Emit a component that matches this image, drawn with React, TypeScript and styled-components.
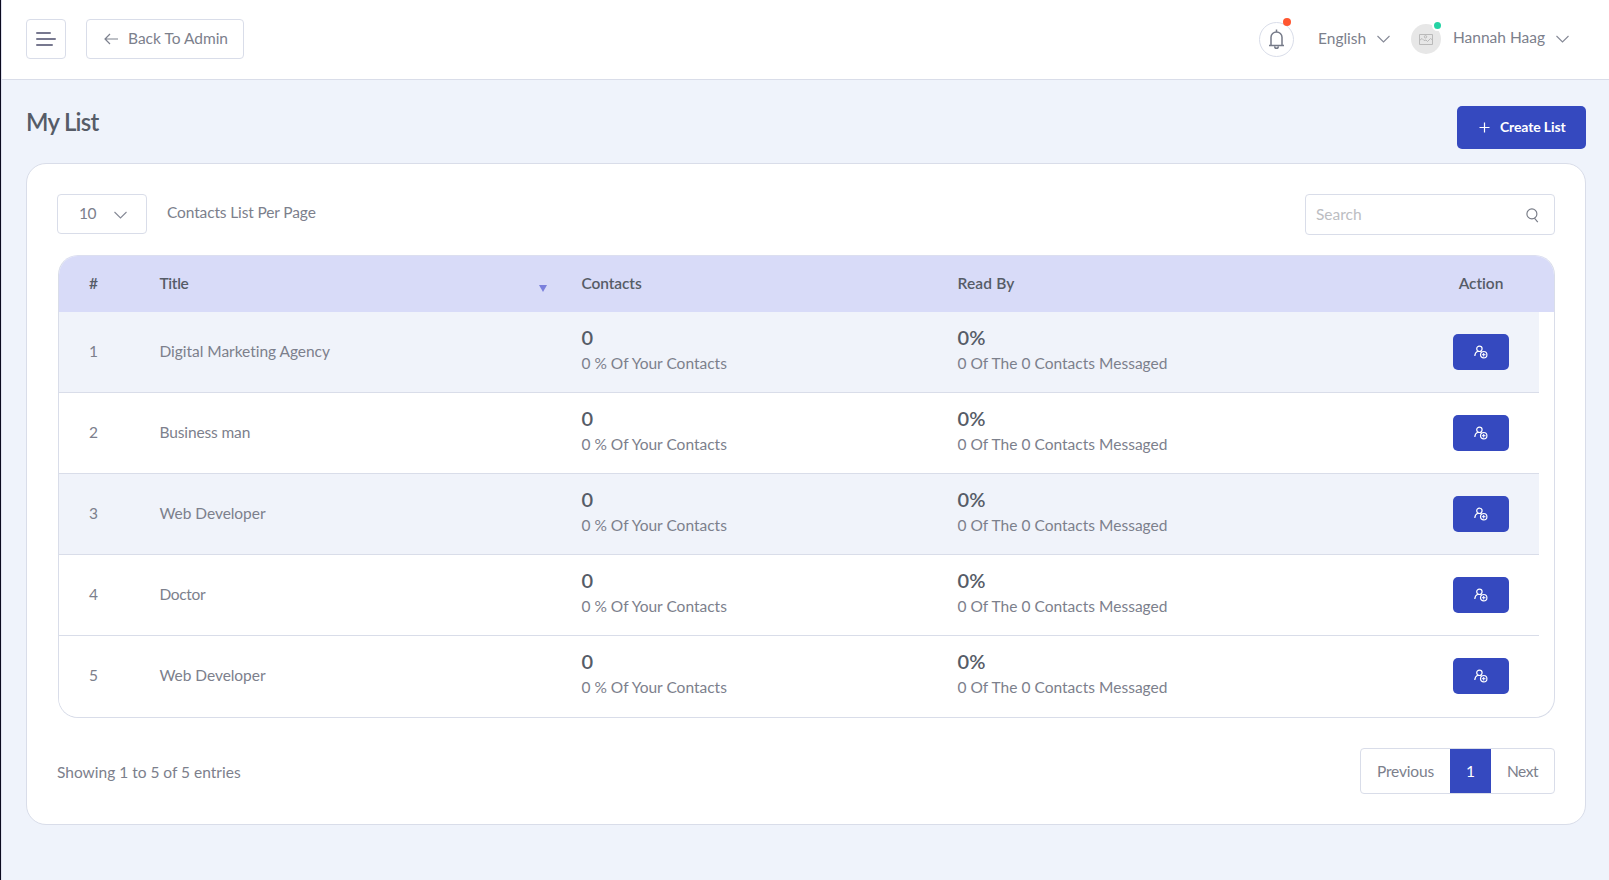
import React from "react";
import styled, { createGlobalStyle } from "styled-components";

const line = "#d9dde9";
const primary = "#3549bf";
const ink = "#7c808c";
const heading = "#565c67";

const GlobalStyle = createGlobalStyle`
  * { box-sizing: border-box; }
  body {
    margin: 0;
    background: #eff3fb;
    color: ${ink};
    font: 400 15.5px/24px Lato, "Liberation Sans", sans-serif;
    font-variant-ligatures: none;
  }
  button { font: inherit; color: inherit; cursor: pointer; padding: 0; }
`;

const Page = styled.div`
  min-height: 880px;
  border-left: 1px solid #0b0a1f;
  box-shadow: inset 1px 0 0 #dfe1ee;
`;

const Label = styled.span<{ $spacing?: number }>`
  letter-spacing: ${(p) => p.$spacing ?? 0}px;
  white-space: nowrap;
`;

const Header = styled.header`
  display: flex;
  align-items: flex-start;
  height: 80px;
  margin-left: 1px;
  padding: 19px 40px 0 24px;
  background: #fff;
  border-bottom: 1px solid ${line};
  ${Label} { padding-bottom: 2px; }
`;

const OutlineButton = styled.button<{ $width: number }>`
  display: flex;
  align-items: center;
  width: ${(p) => p.$width}px;
  height: 40px;
  background: #fff;
  border: 1px solid ${line};
  border-radius: 4px;
`;

const MenuButton = styled(OutlineButton)`
  padding-left: 9px;
  margin-right: 20px;
`;

const BackButton = styled(OutlineButton)`
  padding-left: 17px;
  gap: 9px;
`;

const HeaderTools = styled.div`
  display: flex;
  align-items: center;
  height: 40px;
  margin-left: auto;
`;

const BellButton = styled.button`
  position: relative;
  display: grid;
  place-items: center;
  width: 35px;
  height: 35px;
  margin: 1px 24px 0 0;
  background: #fff;
  border: 1px solid ${line};
  border-radius: 50%;
`;

const AlertDot = styled.i`
  position: absolute;
  top: -5px;
  right: 2px;
  width: 8px;
  height: 8px;
  border-radius: 50%;
  background: #ff5630;
`;

const Language = styled.div`
  display: flex;
  align-items: center;
  gap: 11px;
  width: 93px;
`;

const Avatar = styled.div`
  position: relative;
  display: grid;
  place-items: center;
  width: 30px;
  height: 30px;
  margin-right: 12px;
  border-radius: 50%;
  background: #e7e7e7;
`;

const OnlineDot = styled.i`
  position: absolute;
  top: -4px;
  right: -2px;
  width: 11px;
  height: 11px;
  border: 2px solid #fff;
  border-radius: 50%;
  background: #24d3a4;
`;

const UserName = styled.div`
  display: flex;
  align-items: center;
  gap: 11px;
  width: 116px;
  ${Label} { padding-bottom: 4px; }
`;

const Main = styled.main`
  padding: 26px 23px 0 25px;
`;

const TitleBar = styled.div`
  display: flex;
  justify-content: space-between;
  height: 57px;
`;

const PageTitle = styled.h1`
  margin: 0;
  font-size: 24px;
  font-weight: 600;
  line-height: 32px;
  letter-spacing: -0.75px;
  color: ${heading};
`;

const CreateButton = styled.button`
  display: flex;
  align-items: center;
  gap: 10px;
  width: 129px;
  height: 43px;
  padding: 0 0 0 22px;
  border: 0;
  border-radius: 5px;
  background: ${primary};
  color: #fff;
  font-size: 14px;
  font-weight: 700;
  ${Label} { padding-bottom: 2px; }
`;

const Card = styled.section`
  height: 662px;
  padding: 30px 30px 0;
  background: #fff;
  border: 1px solid ${line};
  border-radius: 20px;
`;

const Controls = styled.div`
  display: flex;
  align-items: flex-start;
  height: 61px;
`;

const PageSize = styled(OutlineButton)`
  padding-left: 21px;
  gap: 18px;
  margin-right: 20px;
  ${Label} { padding-bottom: 2px; }
  svg { margin-top: 2px; }
`;

const ControlLabel = styled.div`
  padding-top: 6px;
`;

const SearchBox = styled.label`
  display: flex;
  align-items: center;
  width: 250px;
  height: 41px;
  margin-left: auto;
  padding: 0 15px 0 10px;
  border: 1px solid ${line};
  border-radius: 4px;
  svg { margin-top: 2px; }
`;

const SearchInput = styled.input`
  flex: 1;
  min-width: 0;
  padding: 0 0 2px;
  border: 0;
  outline: 0;
  font: inherit;
  &::placeholder { color: #bcbdc2; opacity: 1; }
`;

const Table = styled.div`
  margin-left: 1px;
  height: 463px;
  overflow: hidden;
  border: 1px solid ${line};
  border-top-color: #dcdff0;
  border-radius: 20px;
`;

const Row = styled.div`
  display: grid;
  grid-template-columns: 70.5px 422px 376px 1fr 56px;
  align-items: center;
  padding: 0 30px;
`;

const HeadRow = styled(Row)`
  height: 56px;
  padding-right: 45px;
  background: #d8dbf8;
  color: ${heading};
  font-weight: 600;
`;

const HeadCell = styled.div`
  display: flex;
  justify-content: space-between;
  padding: 0 35px 3px 0;
`;

const ActionHeadCell = styled(HeadCell)`
  grid-column: 5;
  justify-content: center;
  padding-right: 0;
`;

const SortArrow = styled.svg`
  margin-top: 14px;
`;

const BodyRow = styled(Row)<{ $shaded: boolean }>`
  height: 81px;
  margin-right: 15px;
  background: ${(p) => (p.$shaded ? "#f0f3fa" : "#fff")};
  border-bottom: 1px solid ${line};
  &:last-child { border-bottom-color: transparent; }
`;

const Cell = styled.div`
  padding-bottom: 2px;
`;

const Stat = styled.div`
  display: flex;
  flex-direction: column;
  padding-bottom: 4px;
  line-height: 26px;
`;

const StatValue = styled.strong`
  font-size: 20px;
  font-weight: 600;
  line-height: 25px;
  letter-spacing: 0.2px;
  color: ${heading};
`;

const ActionButton = styled.button`
  grid-column: 5;
  display: grid;
  place-items: center;
  width: 56px;
  height: 36px;
  border: 0;
  border-radius: 5px;
  background: ${primary};
`;

const Footer = styled.footer`
  display: flex;
  justify-content: space-between;
  padding-top: 30px;
`;

const Summary = styled.div`
  padding-top: 12px;
`;

const Pagination = styled.nav`
  display: flex;
  height: 46px;
  border: 1px solid ${line};
  border-radius: 4px;
`;

const PageLink = styled.button<{ $width: number; $active?: boolean }>`
  width: ${(p) => p.$width}px;
  padding-bottom: 1px;
  border: 0;
  background: ${(p) => (p.$active ? primary : "transparent")};
  color: ${(p) => (p.$active ? "#fff" : ink)};
`;

const Chevron = () => (
  <svg width="13" height="8" viewBox="0 0 13 8" fill="none" stroke="#858996" strokeWidth="1.1">
    <path d="M.5 1 6.5 6.9 12.5 1" />
  </svg>
);

const MenuIcon = () => (
  <svg width="20" height="14" viewBox="0 0 20 14" fill="none" stroke="#77788f" strokeWidth="2" strokeLinecap="round">
    <path d="M1 1h13M1 7h18M1 13h15" />
  </svg>
);

const ArrowIcon = () => (
  <svg width="15" height="12" viewBox="0 0 15 12" fill="none" stroke="#7d818e" strokeWidth="1.2">
    <path d="M14 6H1.2M6 1 1 6l5 5" />
  </svg>
);

const BellIcon = () => (
  <svg width="17" height="21" viewBox="0 0 17 21" fill="none" stroke="#757a88" strokeWidth="1.5">
    <path d="M1 16.4h15M3 16V8.2a5.5 5.2 0 0 1 11 0V16M8.5 3V.5M6.7 17.5a1.8 1.8 0 0 0 3.6 0" />
  </svg>
);

const ImageIcon = () => (
  <svg width="14" height="11" viewBox="0 0 14 11" fill="none" stroke="#b9b9b9" strokeWidth="1">
    <path d="M.5.5h13v10H.5zM.5 6.5 3 4.500l2 2L7 6l1.500 1.500 3-3 2 1.500" />
    <circle cx="6.5" cy="2.800" r="1.200" />
  </svg>
);

const SearchIcon = () => (
  <svg width="13" height="15" viewBox="0 0 13 15" fill="none" stroke="#777b86" strokeWidth="1.15">
    <circle cx="5.9" cy="5.9" r="5" />
    <path d="m8.4 10.2 3.400 4" />
  </svg>
);

const PlusIcon = () => (
  <svg width="11" height="11" viewBox="0 0 11 11" stroke="#fff" strokeWidth="1.2">
    <path d="M5.5.5v10M.5 5.5h10" />
  </svg>
);

const AddContactIcon = () => (
  <svg width="14" height="14" viewBox="0 0 14 14" fill="none" stroke="#fff" strokeWidth="1.2">
    <circle cx="5.4" cy="3.8" r="2.7" />
    <path d="M.8 11c.1-2.400 1.200-4 3-4.700M6.500 6.500l1 .800" />
    <circle cx="9.7" cy="9.7" r="3.2" />
    <path d="M9.700 7.900v3.600M7.900 9.700h3.600" strokeWidth="1" />
  </svg>
);

const lists = [
  { title: "Digital Marketing Agency", spacing: -0.03, shaded: true },
  { title: "Business man", spacing: -0.13, shaded: false },
  { title: "Web Developer", spacing: -0.05, shaded: true },
  { title: "Doctor", spacing: -0.35, shaded: false },
  { title: "Web Developer", spacing: -0.05, shaded: false },
];

export default function App() {
  return (
    <Page>
      <GlobalStyle />
      <Header>
        <MenuButton $width={40} aria-label="Menu"><MenuIcon /></MenuButton>
        <BackButton $width={158}>
          <ArrowIcon />
          <Label>Back To Admin</Label>
        </BackButton>
        <HeaderTools>
          <BellButton aria-label="Notifications"><BellIcon /><AlertDot /></BellButton>
          <Language><Label>English</Label><Chevron /></Language>
          <Avatar><ImageIcon /><OnlineDot /></Avatar>
          <UserName><Label>Hannah Haag</Label><Chevron /></UserName>
        </HeaderTools>
      </Header>
      <Main>
        <TitleBar>
          <PageTitle>My List</PageTitle>
          <CreateButton><PlusIcon /><Label $spacing={-0.13}>Create List</Label></CreateButton>
        </TitleBar>
        <Card>
          <Controls>
            <PageSize $width={90}><Label $spacing={-0.4}>10</Label><Chevron /></PageSize>
            <ControlLabel><Label $spacing={-0.13}>Contacts List Per Page</Label></ControlLabel>
            <SearchBox><SearchInput placeholder="Search" /><SearchIcon /></SearchBox>
          </Controls>
          <Table>
            <HeadRow>
              <HeadCell>#</HeadCell>
              <HeadCell>
                <Label $spacing={-0.35}>Title</Label>
                <SortArrow width="8" height="7" viewBox="0 0 8 7" fill="#7b80dc"><path d="M0 0h8L4 7z" /></SortArrow>
              </HeadCell>
              <HeadCell><Label $spacing={-0.1}>Contacts</Label></HeadCell>
              <HeadCell><Label $spacing={0.15}>Read By</Label></HeadCell>
              <ActionHeadCell><Label $spacing={-0.05}>Action</Label></ActionHeadCell>
            </HeadRow>
            {lists.map((item, index) => (
              <BodyRow key={index} $shaded={item.shaded}>
                <Cell>{index + 1}</Cell>
                <Cell><Label $spacing={item.spacing}>{item.title}</Label></Cell>
                <Stat>
                  <StatValue>0</StatValue>
                  <Label>0 % Of Your Contacts</Label>
                </Stat>
                <Stat>
                  <StatValue>0%</StatValue>
                  <Label $spacing={0.02}>0 Of The 0 Contacts Messaged</Label>
                </Stat>
                <ActionButton aria-label="Add contact"><AddContactIcon /></ActionButton>
              </BodyRow>
            ))}
          </Table>
          <Footer>
            <Summary><Label>Showing 1 to 5 of 5 entries</Label></Summary>
            <Pagination>
              <PageLink $width={89}><Label $spacing={-0.15}>Previous</Label></PageLink>
              <PageLink $width={41} $active>1</PageLink>
              <PageLink $width={63}><Label $spacing={-0.45}>Next</Label></PageLink>
            </Pagination>
          </Footer>
        </Card>
      </Main>
    </Page>
  );
}
